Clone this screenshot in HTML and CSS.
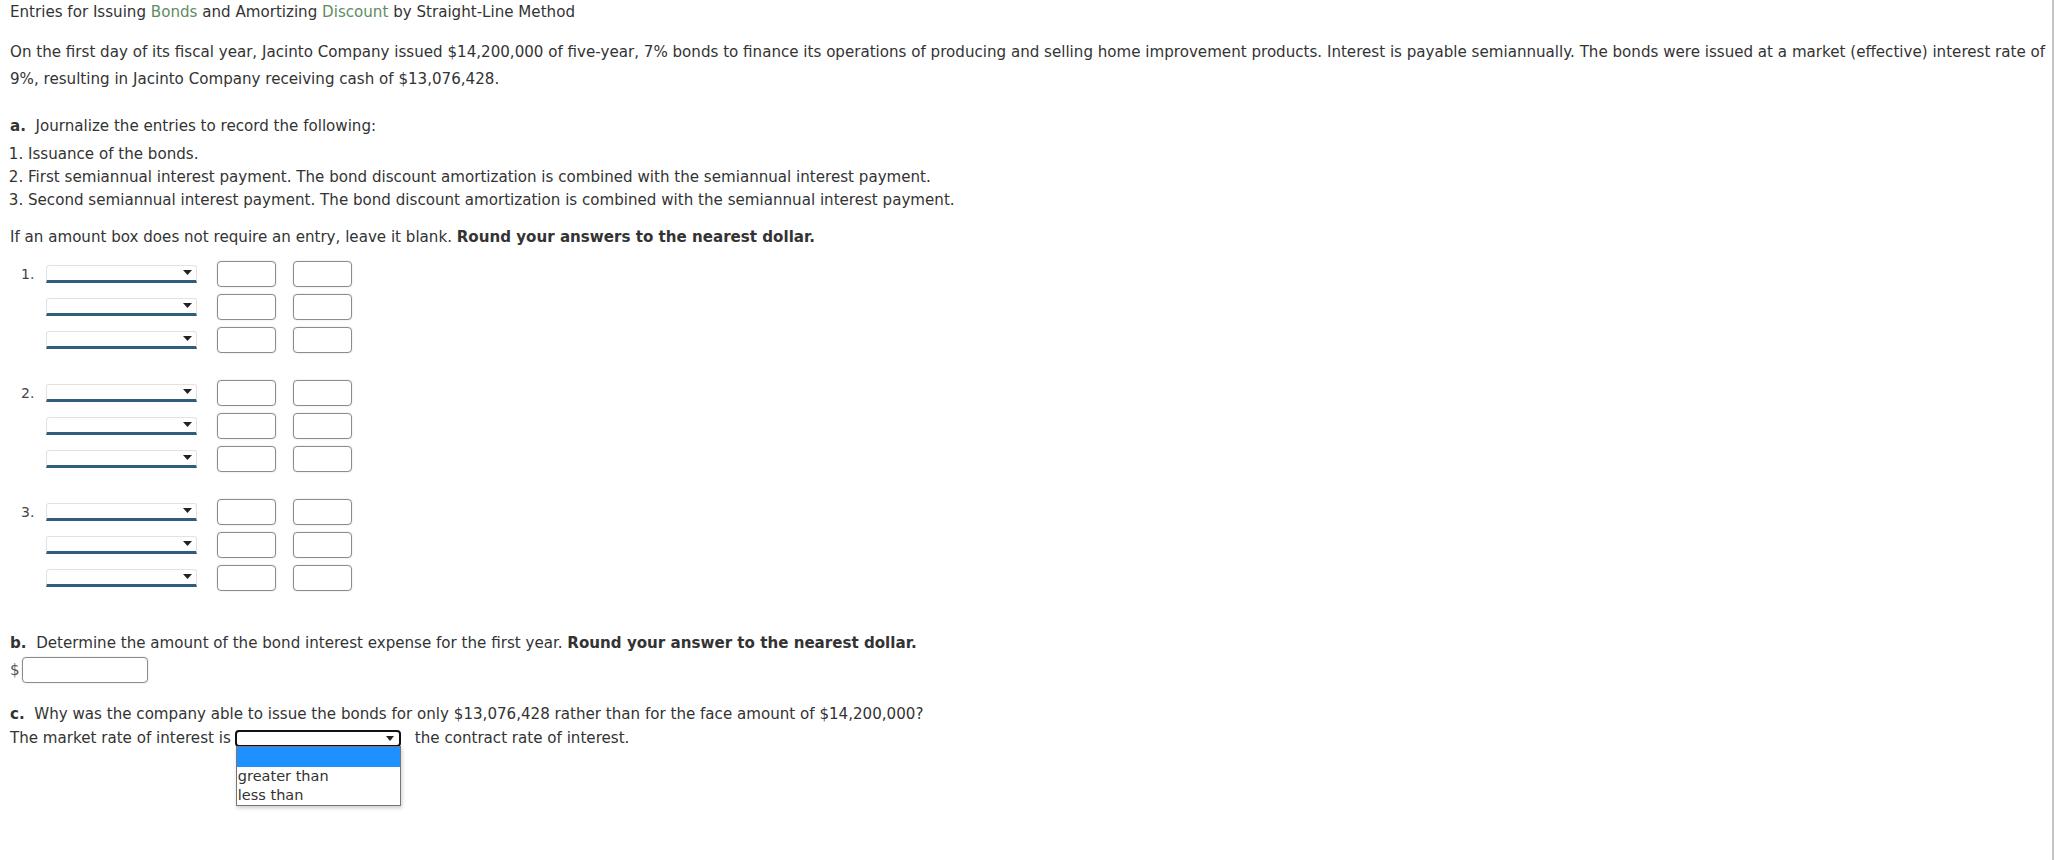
FILE: index.html
```html
<!DOCTYPE html>
<html lang="en">
<head>
    <meta charset="UTF-8">
    <meta name="viewport" content="width=device-width, initial-scale=1.0">
    <title>Entries for Issuing Bonds</title>
    <link rel="stylesheet" href="styles.css">
</head>
<body>
    <div class="page">
        <div class="title">Entries for Issuing <span class="term">Bonds</span> and Amortizing <span class="term">Discount</span> by Straight-Line Method</div>

        <p class="intro">On the first day of its fiscal year, Jacinto Company issued $14,200,000 of five-year, 7% bonds to finance its operations of producing and selling home improvement products. Interest is payable semiannually. The bonds were issued at a market (effective) interest rate of 9%, resulting in Jacinto Company receiving cash of $13,076,428.</p>

        <div class="part-title"><b>a.</b>&nbsp; Journalize the entries to record the following:</div>
        <ol class="steps">
            <li>Issuance of the bonds.</li>
            <li>First semiannual interest payment. The bond discount amortization is combined with the semiannual interest payment.</li>
            <li>Second semiannual interest payment. The bond discount amortization is combined with the semiannual interest payment.</li>
        </ol>

        <div class="note">If an amount box does not require an entry, leave it blank. <b>Round your answers to the nearest dollar.</b></div>

        <div class="journal">
            <div class="entry">
                <div class="entry-row">
                    <span class="entry-num">1.</span>
                    <div class="account"><svg width="9" height="5" viewBox="0 0 9 5"><path d="M0 0h9L4.5 5z"/></svg></div>
                    <input type="text" class="amount">
                    <input type="text" class="amount">
                </div>
                <div class="entry-row">
                    <span class="entry-num"></span>
                    <div class="account"><svg width="9" height="5" viewBox="0 0 9 5"><path d="M0 0h9L4.5 5z"/></svg></div>
                    <input type="text" class="amount">
                    <input type="text" class="amount">
                </div>
                <div class="entry-row">
                    <span class="entry-num"></span>
                    <div class="account"><svg width="9" height="5" viewBox="0 0 9 5"><path d="M0 0h9L4.5 5z"/></svg></div>
                    <input type="text" class="amount">
                    <input type="text" class="amount">
                </div>
            </div>

            <div class="entry">
                <div class="entry-row">
                    <span class="entry-num">2.</span>
                    <div class="account"><svg width="9" height="5" viewBox="0 0 9 5"><path d="M0 0h9L4.5 5z"/></svg></div>
                    <input type="text" class="amount">
                    <input type="text" class="amount">
                </div>
                <div class="entry-row">
                    <span class="entry-num"></span>
                    <div class="account"><svg width="9" height="5" viewBox="0 0 9 5"><path d="M0 0h9L4.5 5z"/></svg></div>
                    <input type="text" class="amount">
                    <input type="text" class="amount">
                </div>
                <div class="entry-row">
                    <span class="entry-num"></span>
                    <div class="account"><svg width="9" height="5" viewBox="0 0 9 5"><path d="M0 0h9L4.5 5z"/></svg></div>
                    <input type="text" class="amount">
                    <input type="text" class="amount">
                </div>
            </div>

            <div class="entry">
                <div class="entry-row">
                    <span class="entry-num">3.</span>
                    <div class="account"><svg width="9" height="5" viewBox="0 0 9 5"><path d="M0 0h9L4.5 5z"/></svg></div>
                    <input type="text" class="amount">
                    <input type="text" class="amount">
                </div>
                <div class="entry-row">
                    <span class="entry-num"></span>
                    <div class="account"><svg width="9" height="5" viewBox="0 0 9 5"><path d="M0 0h9L4.5 5z"/></svg></div>
                    <input type="text" class="amount">
                    <input type="text" class="amount">
                </div>
                <div class="entry-row">
                    <span class="entry-num"></span>
                    <div class="account"><svg width="9" height="5" viewBox="0 0 9 5"><path d="M0 0h9L4.5 5z"/></svg></div>
                    <input type="text" class="amount">
                    <input type="text" class="amount">
                </div>
            </div>
        </div>

        <div class="part-b"><b>b.</b>&nbsp; Determine the amount of the bond interest expense for the first year. <b>Round your answer to the nearest dollar.</b></div>
        <div class="dollar-row">
            <span>$</span>
            <input type="text" class="dollar-input">
        </div>

        <div class="part-c"><b>c.</b>&nbsp; Why was the company able to issue the bonds for only $13,076,428 rather than for the face amount of $14,200,000?</div>
        <div class="rate-row">
            <span>The market rate of interest is</span>
            <div class="rate-select-wrap">
                <div class="rate-select"><svg width="8" height="5" viewBox="0 0 8 5"><path d="M0 0h8L4 5z"/></svg></div>
                <div class="rate-options">
                    <div class="option selected">&nbsp;</div>
                    <div class="option">greater than</div>
                    <div class="option">less than</div>
                </div>
            </div>
            <span>the contract rate of interest.</span>
        </div>
    </div>
</body>
</html>
```

FILE: styles.css
```css
body {
    margin: 0;
    font-family: "DejaVu Sans", Verdana, sans-serif;
    font-size: 15.1px;
    color: #333;
    background: #fff;
}
.page {
    height: 860px;
    box-sizing: border-box;
    padding: 0 4px 0 10px;
    border-right: 2px solid #c4c4c4;
}
.title {
    line-height: 24px;
}
.term {
    color: #5e8c5e;
}
.intro {
    margin: 15px 0 0;
    line-height: 27px;
}
.part-title {
    margin-top: 21px;
    line-height: 24px;
}
.steps {
    margin: 5px 0 0;
    padding-left: 18px;
    line-height: 23px;
}
.note {
    margin-top: 13px;
    line-height: 24px;
}
.journal {
    margin-top: 12px;
}
.entry {
    display: flex;
    flex-direction: column;
    gap: 7px;
    margin-bottom: 27px;
}
.entry:last-child {
    margin-bottom: 0;
}
.entry-row {
    display: flex;
    align-items: center;
    height: 26px;
}
.entry-num {
    width: 25px;
    padding-left: 11px;
    color: #444;
    font-size: 14px;
}
.account {
    width: 151px;
    height: 18px;
    box-sizing: border-box;
    display: flex;
    align-items: center;
    justify-content: flex-end;
    padding: 0 4px 1px 0;
    background: #fff;
    border: 1px solid #e2e2e2;
    border-bottom: 3px solid #2f5d7c;
    border-radius: 3px 3px 0 0;
    margin-right: 20px;
}
.account svg {
    fill: #222;
}
.amount {
    width: 59px;
    height: 26px;
    box-sizing: border-box;
    margin: 0 17px 0 0;
    padding: 0 4px;
    border: 1.5px solid #8c8c8c;
    border-radius: 4px;
    box-shadow: 0 0 2px rgba(0, 0, 0, 0.15);
    font: inherit;
}
.part-b {
    margin-top: 40px;
    line-height: 24px;
}
.dollar-row {
    display: flex;
    align-items: center;
    margin-top: 2px;
    color: #555;
}
.dollar-input {
    width: 126px;
    height: 26px;
    box-sizing: border-box;
    margin: 0 0 0 2px;
    border: 1.5px solid #8c8c8c;
    border-radius: 4px;
    box-shadow: 0 0 2px rgba(0, 0, 0, 0.15);
    font: inherit;
}
.part-c {
    margin-top: 19px;
    line-height: 24px;
}
.rate-row {
    display: flex;
    align-items: center;
    height: 24px;
}
.rate-select-wrap {
    position: relative;
    margin: 0 14px 0 4px;
}
.rate-select {
    width: 166px;
    height: 17px;
    box-sizing: border-box;
    display: flex;
    align-items: center;
    justify-content: flex-end;
    padding-right: 5px;
    border: 2px solid #111;
    border-radius: 4px;
    background: #fff;
}
.rate-select svg {
    fill: #222;
}
.rate-options {
    position: absolute;
    left: 1px;
    top: 16px;
    width: 165px;
    box-sizing: border-box;
    background: #fff;
    border: 1px solid #767676;
    box-shadow: 1px 2px 4px rgba(0, 0, 0, 0.2);
    line-height: 19px;
}
.option {
    padding-left: 1px;
    font-size: 14.5px;
}
.option.selected {
    background: #1e90ff;
    height: 20px;
}
```
